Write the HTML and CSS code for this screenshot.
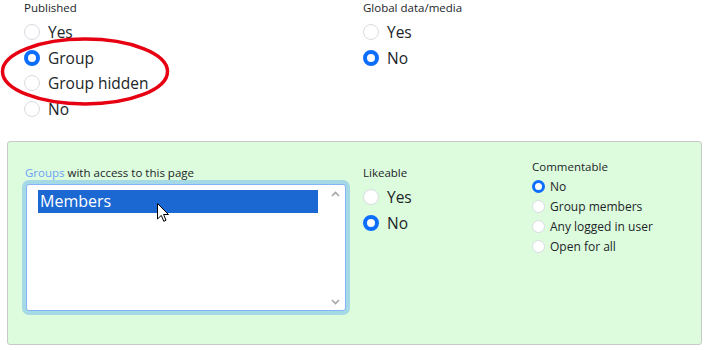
FILE: index.html
```html
<!DOCTYPE html>
<html lang="en">
<head>
<meta charset="utf-8">
<link rel="stylesheet" href="styles.css">
</head>
<body>
<div class="page">
  <section class="top">
    <div class="field">
      <div class="field-label">Published</div>
      <div class="radio-list">
        <label class="opt"><span class="radio"></span>Yes</label>
        <label class="opt"><span class="radio on"></span>Group</label>
        <label class="opt"><span class="radio"></span>Group hidden</label>
        <label class="opt"><span class="radio"></span>No</label>
      </div>
    </div>
    <div class="field">
      <div class="field-label">Global data/media</div>
      <div class="radio-list">
        <label class="opt"><span class="radio"></span>Yes</label>
        <label class="opt"><span class="radio on"></span>No</label>
      </div>
    </div>
  </section>

  <section class="access">
    <div class="col groups-col">
      <div class="field-label"><span class="link">Groups</span> with access to this page</div>
      <div class="listbox">
        <div class="list-items">
          <div class="item selected">Members</div>
        </div>
        <div class="scroll">
          <svg class="chev" width="9" height="6" viewBox="0 0 9 6"><path d="M1 5 L4.5 1.5 L8 5" fill="none" stroke="#a6a6a6" stroke-width="1.6"/></svg>
          <svg class="chev" width="9" height="6" viewBox="0 0 9 6"><path d="M1 1 L4.5 4.5 L8 1" fill="none" stroke="#a6a6a6" stroke-width="1.6"/></svg>
        </div>
      </div>
    </div>
    <div class="col like-col">
      <div class="field-label">Likeable</div>
      <div class="radio-list">
        <label class="opt"><span class="radio"></span>Yes</label>
        <label class="opt"><span class="radio on"></span>No</label>
      </div>
    </div>
    <div class="col comment-col">
      <div class="field-label">Commentable</div>
      <div class="radio-list small">
        <label class="opt"><span class="radio on"></span>No</label>
        <label class="opt"><span class="radio"></span>Group members</label>
        <label class="opt"><span class="radio"></span>Any logged in user</label>
        <label class="opt"><span class="radio"></span>Open for all</label>
      </div>
    </div>
  </section>

  <svg class="annotation" width="172" height="72" viewBox="0 0 172 72">
    <ellipse cx="85" cy="35.5" rx="82.5" ry="32.5" fill="none" stroke="#e60012" stroke-width="3.5"/>
  </svg>
  <svg class="cursor" width="13" height="20" viewBox="0 0 13 20">
    <path d="M0.5 0.5 L0.5 16 L4.3 12.4 L6.8 18.3 L9 17.3 L6.6 11.5 L11.5 11.5 Z" fill="#fff" stroke="#000" stroke-width="1" stroke-linejoin="miter"/>
  </svg>
</div>
</body>
</html>
```

FILE: styles.css
```css
html, body {
  margin: 0;
  padding: 0;
  background: #ffffff;
}

body {
  font-family: "Open Sans", "Noto Sans", sans-serif;
  color: #212529;
  width: 708px;
  height: 350px;
  overflow: hidden;
}

.page {
  position: relative;
  padding: 0 6px 0 7px;
}

.top {
  display: grid;
  grid-template-columns: 339px 1fr;
  padding-left: 17px;
  height: 141px;
}

.field-label {
  font-size: 11.5px;
  line-height: 16px;
  color: #212529;
}

.link {
  color: #6d9ff7;
}

.radio-list {
  display: flex;
  flex-direction: column;
  margin-top: 3px;
}

.opt {
  display: flex;
  align-items: center;
  height: 25.7px;
  font-size: 15.5px;
  color: #212529;
}

.radio {
  box-sizing: border-box;
  width: 16px;
  height: 16px;
  border-radius: 50%;
  border: 1px solid #d8dce0;
  background: #fff;
  margin-right: 8px;
  flex: none;
}

.radio.on {
  border: 4px solid #0d6efd;
  background: #fff;
}

.access {
  box-sizing: border-box;
  height: 204px;
  border: 1px solid #c9c9c9;
  border-radius: 3px;
  background: #ddfcdd;
  display: flex;
  padding: 0 0 0 17px;
}

.col {
  padding-top: 23px;
}

.groups-col {
  width: 338px;
}

.like-col {
  width: 169px;
}

.comment-col {
  padding-top: 17px;
}

.listbox {
  box-sizing: border-box;
  margin: 3px 0 0 1px;
  width: 320px;
  height: 127px;
  background: #fff;
  border: 1px solid #86b3f7;
  border-radius: 3px;
  box-shadow: 0 0 0 4px #a6d9e6;
  display: flex;
}

.list-items {
  flex: 1;
  padding: 5px 0 0 11px;
}

.item {
  width: 280px;
  height: 23px;
  line-height: 23px;
  font-size: 16px;
  padding-left: 2px;
  box-sizing: border-box;
}

.item.selected {
  background: #1b68d3;
  color: #ffffff;
}

.scroll {
  width: 17px;
  display: flex;
  flex-direction: column;
  justify-content: space-between;
  align-items: center;
  padding: 6px 0 5px;
  margin-right: 1px;
}

.chev {
  display: block;
}

.radio-list.small {
  margin-top: 1px;
}

.radio-list.small .opt {
  height: 20px;
  font-size: 12px;
}

.radio-list.small .radio {
  width: 13px;
  height: 13px;
  margin-right: 5px;
}

.radio-list.small .radio.on {
  border-width: 3.5px;
}

.annotation {
  position: absolute;
  left: 0;
  top: 36px;
}

.cursor {
  position: absolute;
  left: 157px;
  top: 203px;
}
```
